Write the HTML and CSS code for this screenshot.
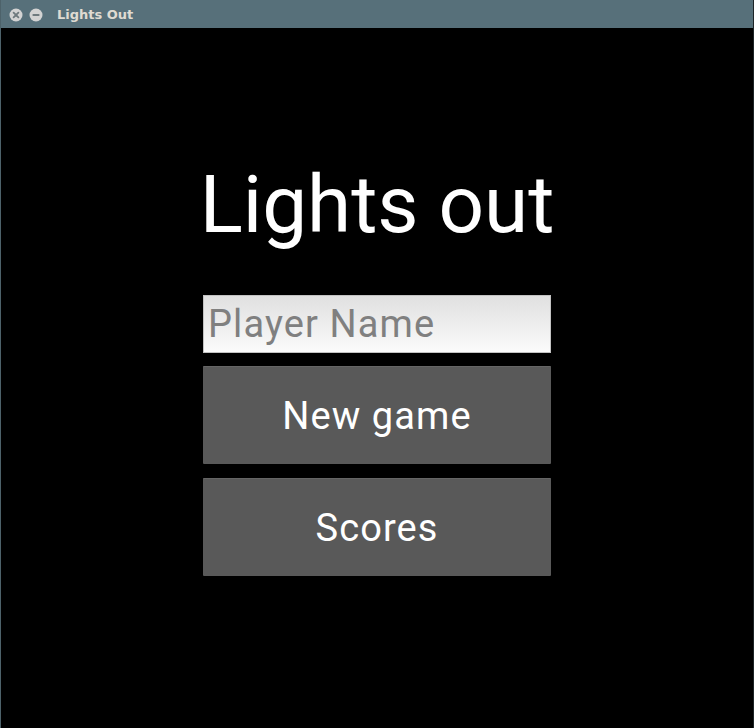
FILE: index.html
```html
<!DOCTYPE html>
<html>
<head>
<meta charset="utf-8">
<title>Lights Out</title>
<link rel="stylesheet" href="styles.css">
</head>
<body>
<div class="window">
  <div class="titlebar">
    <div class="controls">
      <span class="ctl">
        <svg width="14" height="14" viewBox="0 0 14 14"><circle cx="7" cy="7" r="6.5" fill="#d3d3d3"/><path d="M4.6 4.6 L9.4 9.4 M9.4 4.6 L4.6 9.4" stroke="#6f7a7e" stroke-width="1.8" stroke-linecap="round"/></svg>
      </span>
      <span class="ctl">
        <svg width="14" height="14" viewBox="0 0 14 14"><circle cx="7" cy="7" r="6.5" fill="#d3d3d3"/><path d="M4.3 7 H9.7" stroke="#6f7a7e" stroke-width="1.8" stroke-linecap="round"/></svg>
      </span>
    </div>
    <span class="wtitle">Lights Out</span>
  </div>
  <div class="content">
    <h1 class="heading">Lights out</h1>
    <input class="name" type="text" placeholder="Player Name">
    <button class="btn">New game</button>
    <button class="btn">Scores</button>
  </div>
</div>
</body>
</html>
```
FILE: styles.css
```css
html, body {
  margin: 0;
  padding: 0;
  background: #000;
}
.window {
  width: 754px;
  height: 728px;
  display: flex;
  flex-direction: column;
  box-sizing: border-box;
  border-left: 1px solid #4d626a;
  border-right: 1px solid #1d2427;
  background: #000;
  overflow: hidden;
}
.titlebar {
  height: 28px;
  flex: none;
  background: #57707a;
  display: flex;
  align-items: center;
  font-family: "DejaVu Sans", sans-serif;
  font-weight: bold;
  font-size: 13px;
  color: #dfdbd2;
}
.controls {
  display: flex;
  gap: 6px;
  padding-left: 8px;
  padding-top: 1px;
}
.ctl {
  width: 14px;
  height: 14px;
  display: block;
}
.ctl svg { display: block; }
.wtitle {
  margin-left: 14px;
  padding-top: 1px;
}
.content {
  flex: 1;
  display: flex;
  flex-direction: column;
  align-items: center;
  font-family: Roboto, "Noto Sans", sans-serif;
}
.heading {
  margin: 137px 0 0 0;
  font-weight: normal;
  font-size: 80px;
  line-height: 80px;
  color: #fff;
}
.name {
  margin-top: 50px;
  width: 348px;
  height: 58px;
  box-sizing: border-box;
  border: 1px solid #c2c2c2;
  background: linear-gradient(#e0e0e0, #fbfbfb);
  font-family: Roboto, sans-serif;
  font-size: 38px;
  letter-spacing: 1.1px;
  padding: 0 0 0 4px;
  color: #333;
  outline: none;
}
.name::placeholder {
  color: #808080;
}
.btn {
  margin-top: 13px;
  width: 348px;
  height: 98px;
  border: none;
  border-top: 1px solid #656565;
  border-radius: 1px;
  background: #595959;
  color: #fff;
  font-family: Roboto, sans-serif;
  font-size: 38px;
  letter-spacing: 1.1px;
  padding: 0;
}
.btn + .btn {
  margin-top: 14px;
}
```
